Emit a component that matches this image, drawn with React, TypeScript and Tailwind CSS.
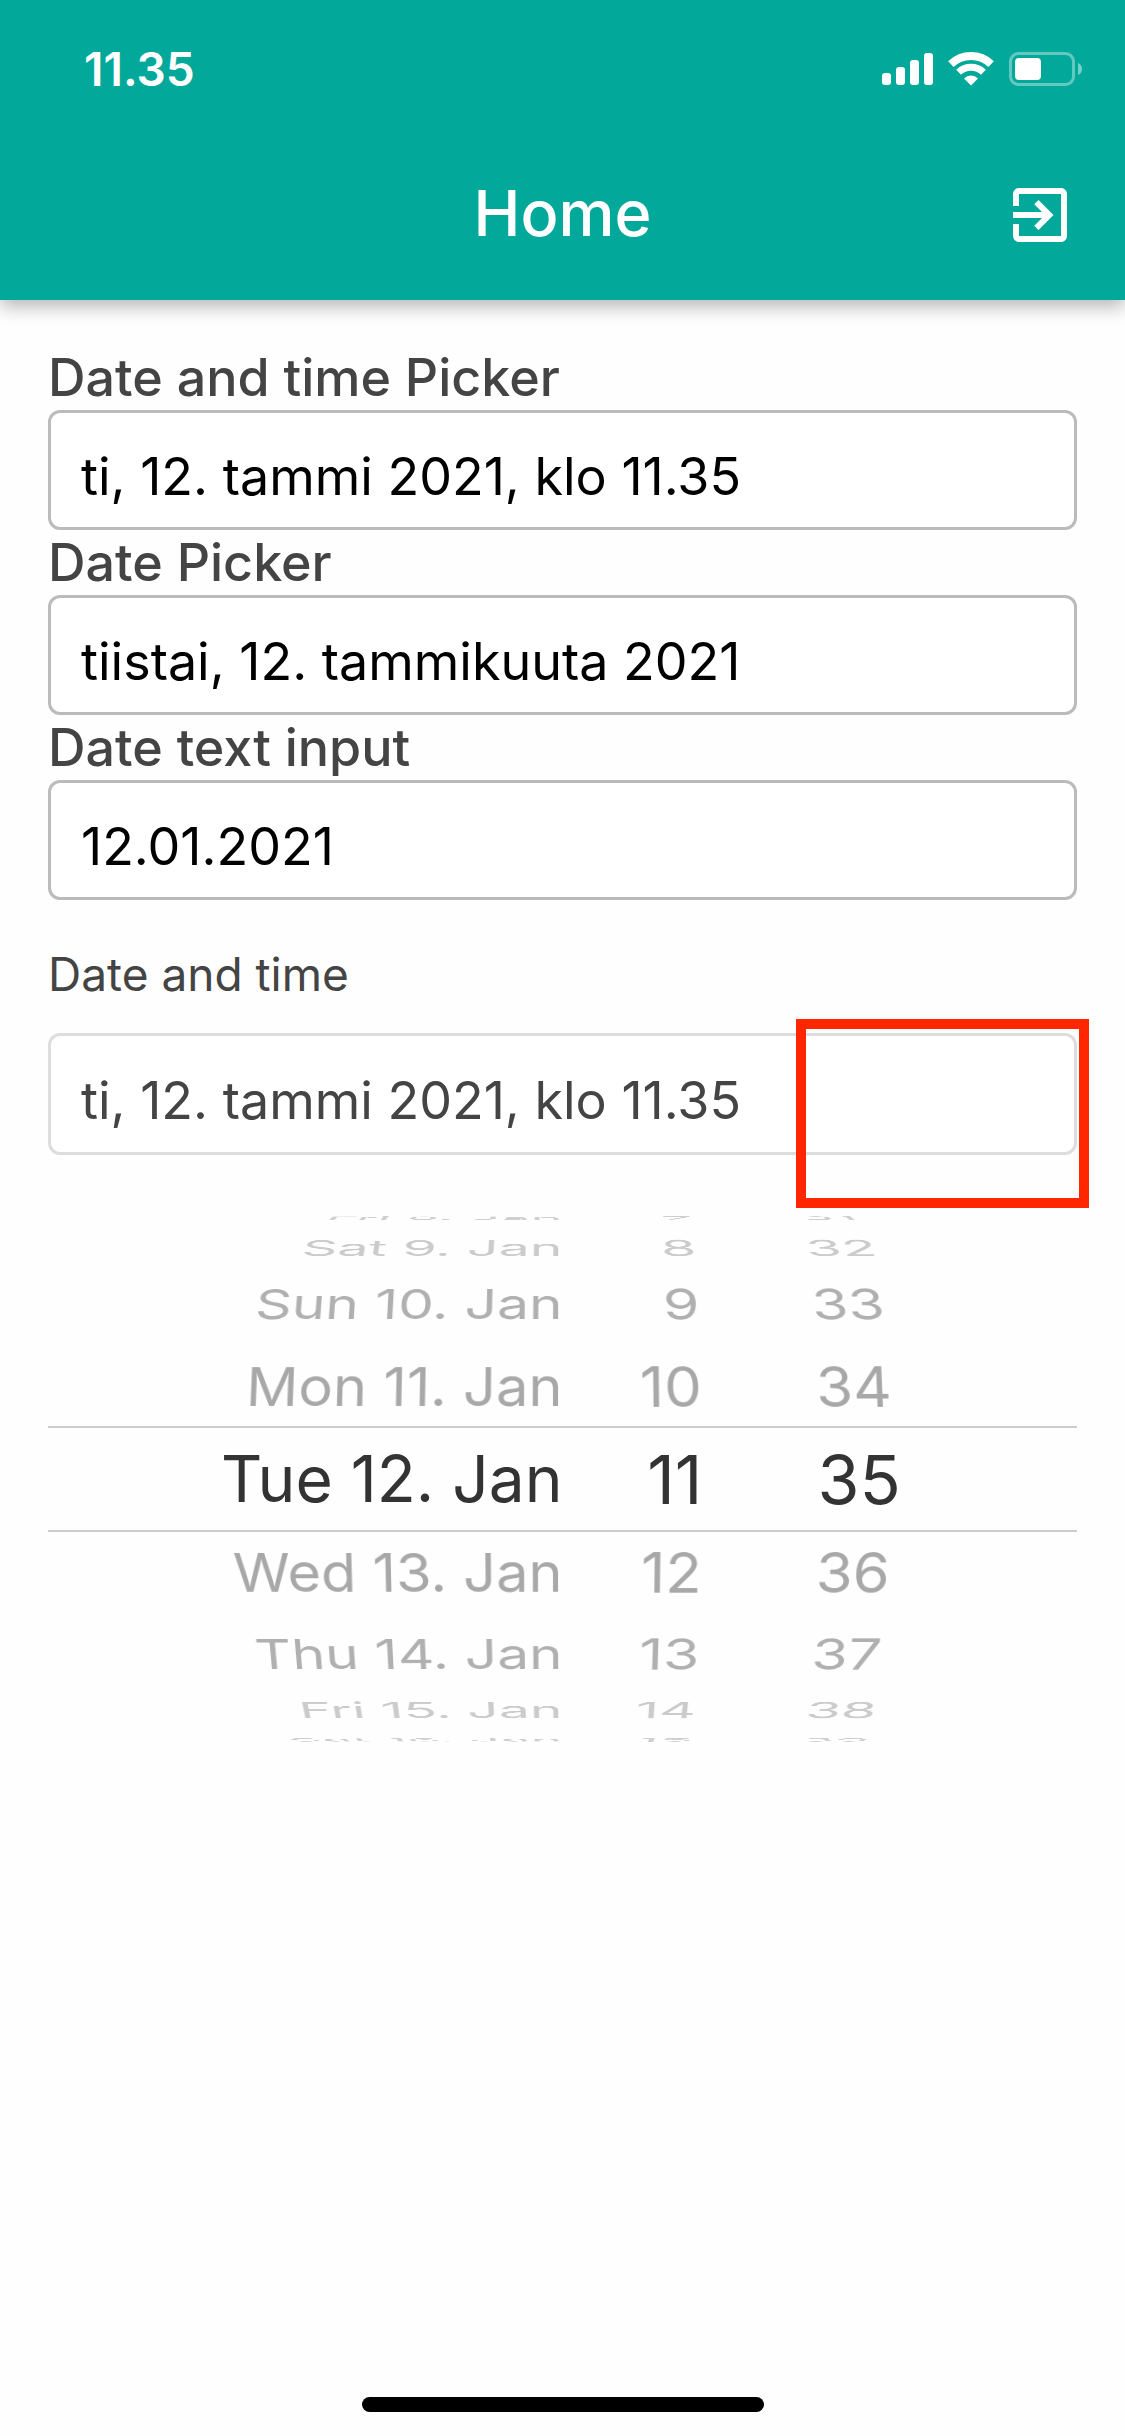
import { MdExitToApp } from "react-icons/md";

type WheelRow = { date: string; hour: string; minute: string; selected?: boolean; look: string };

const rows: WheelRow[] = [
  { date: "Fri 8. Jan", hour: "7", minute: "31", look: "h-10 text-[#cfcfcf] rotate-x-80 translate-z-[-205px]" },
  { date: "Sat 9. Jan", hour: "8", minute: "32", look: "h-9 text-[#cbcbcb] rotate-x-62 translate-z-[-132px]" },
  { date: "Sun 10. Jan", hour: "9", minute: "33", look: "h-[90px] text-[#b0b0b0] rotate-x-40 translate-z-[-63px]" },
  { date: "Mon 11. Jan", hour: "10", minute: "34", look: "h-[81px] text-[#a8a8a8] rotate-x-20 translate-z-[-16px]" },
  { date: "Tue 12. Jan", hour: "11", minute: "35", selected: true, look: "h-[106px] border-y-2 border-[#cccccc] text-[#333333]" },
  { date: "Wed 13. Jan", hour: "12", minute: "36", look: "h-[81px] text-[#a8a8a8] -rotate-x-20 translate-z-[-16px]" },
  { date: "Thu 14. Jan", hour: "13", minute: "37", look: "h-[90px] text-[#b0b0b0] -rotate-x-40 translate-z-[-63px]" },
  { date: "Fri 15. Jan", hour: "14", minute: "38", look: "h-9 text-[#cbcbcb] -rotate-x-62 translate-z-[-132px]" },
  { date: "Sat 16. Jan", hour: "15", minute: "39", look: "h-10 text-[#cfcfcf] -rotate-x-80 translate-z-[-205px]" },
];

function StatusIcons() {
  return (
    <div className="flex items-center">
      <svg viewBox="0 0 51 34" className="mr-[15px] h-[34px] w-[51px]" fill="white" aria-label="Signal">
        <rect x="0" y="21" width="9" height="12" rx="3" />
        <rect x="14" y="15" width="9" height="18" rx="3" />
        <rect x="28" y="8" width="9" height="25" rx="3" />
        <rect x="42" y="1" width="9" height="32" rx="3" />
      </svg>
      <svg viewBox="0 0 46 34" className="mr-[15px] h-[34px] w-[46px]" fill="none" stroke="white" aria-label="Wi-Fi">
        <path d="M2.9 12.1A29 29 0 0 1 43.1 12.1" strokeWidth="8" />
        <path d="M10.6 20.2A18 18 0 0 1 35.4 20.2" strokeWidth="7" />
        <path d="M16 26.4A10 10 0 0 1 30 26.4L23 33.5Z" fill="white" stroke="none" />
      </svg>
      <svg viewBox="0 0 73 34" className="h-[34px] w-[73px]" fill="white" aria-label="Battery">
        <rect x="1.5" y="1.5" width="63" height="31" rx="8" fill="none" stroke="white" strokeOpacity="0.38" strokeWidth="3" />
        <rect x="6" y="6" width="26" height="22" rx="4" />
        <path d="M69 11a6.5 6.5 0 0 1 0 12z" fillOpacity="0.45" />
      </svg>
    </div>
  );
}

function Field({ id, label, value }: { id: string; label: string; value: string }) {
  return (
    <div className="flex flex-col">
      <label htmlFor={id} className="flex h-[65px] items-center text-[52px] leading-none font-medium text-[#444444]">
        {label}
      </label>
      <input
        id={id}
        type="text"
        defaultValue={value}
        className="h-[120px] w-full rounded-xl border-[3px] border-[#bbbbbb] bg-white px-[30px] pt-3 text-[52px] text-black outline-none"
      />
    </div>
  );
}

export default function App() {
  return (
    <div className="flex min-h-screen flex-col bg-[#fefefe] font-['Inter',sans-serif]">
      <header className="flex h-[300px] flex-col bg-[#02a899] text-white shadow-[0_6px_18px_rgba(0,0,0,0.3)]">
        <div className="flex h-[138px] items-center justify-between pr-[43px] pl-[84px]">
          <span className="text-[46px] leading-none font-semibold">11.35</span>
          <StatusIcons />
        </div>
        <div className="grid h-[154px] grid-cols-[1fr_auto_1fr] items-center pr-[49px]">
          <h1 className="col-start-2 pb-1 pl-[49px] text-[63px] leading-none font-medium">Home</h1>
          <button type="button" aria-label="Sign out" className="justify-self-end">
            <MdExitToApp className="size-[72px]" />
          </button>
        </div>
      </header>

      <main className="flex flex-1 flex-col px-12 pt-[45px]">
        <Field id="date-time" label="Date and time Picker" value="ti, 12. tammi 2021, klo 11.35" />
        <Field id="date" label="Date Picker" value="tiistai, 12. tammikuuta 2021" />
        <Field id="date-text" label="Date text input" value="12.01.2021" />

        <label htmlFor="selected" className="mt-[50px] text-[46px] leading-[48px] text-[#444444]">
          Date and time
        </label>
        <div className="relative mt-[35px]">
          <input
            id="selected"
            type="text"
            readOnly
            value="ti, 12. tammi 2021, klo 11.35"
            className="block h-[122px] w-full rounded-xl border-[3px] border-[#dddddd] bg-white px-[30px] pt-3 text-[52px] text-[#444444] outline-none"
          />
          <div className="absolute -top-3.5 -right-3 h-[189px] w-[293px] border-[10px] border-[#ff2600]" />
        </div>

        <div role="group" aria-label="Date and time wheel" className="mt-6 flex flex-col perspective-[2800px]">
          {rows.map((row) => (
            <div
              key={row.date}
              className={`grid grid-cols-[1fr_1fr] content-center items-center leading-none whitespace-nowrap ${row.look}`}
            >
              <span className={row.selected ? "text-right text-[64px]" : "text-right text-[58px]"}>{row.date}</span>
              <span className={row.selected ? "flex text-[68px]" : "flex text-[60px]"}>
                <span className="w-[140px] text-right">{row.hour}</span>
                <span className="ml-[115px]">{row.minute}</span>
              </span>
            </div>
          ))}
        </div>
      </main>

      <footer className="flex justify-center pb-6">
        <div className="h-[15px] w-[402px] rounded-full bg-black" />
      </footer>
    </div>
  );
}
